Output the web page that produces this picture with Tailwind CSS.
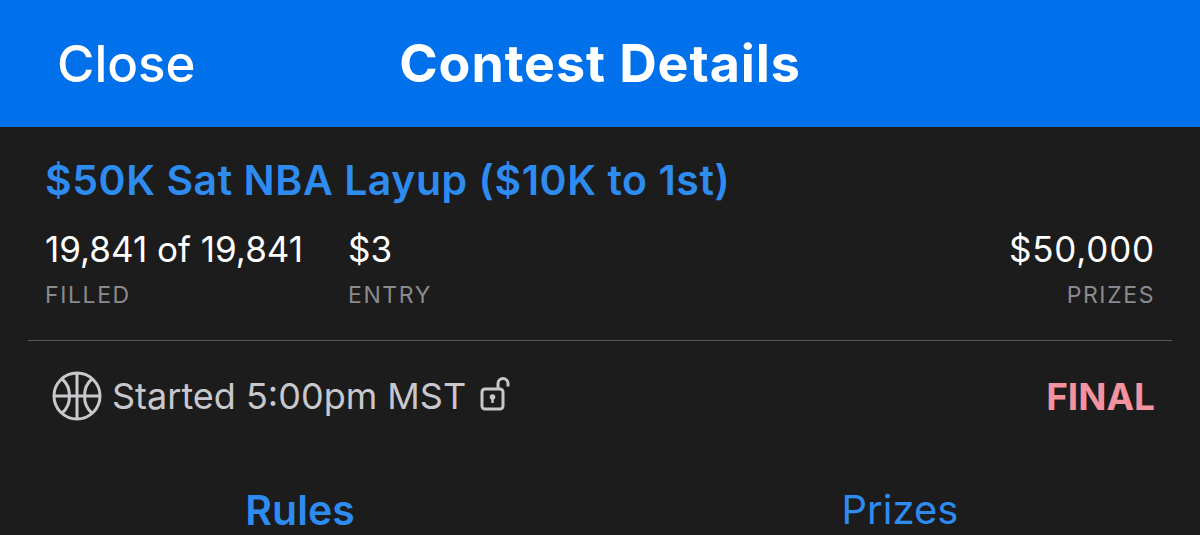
<!DOCTYPE html>
<html><head><script src="https://cdn.jsdelivr.net/npm/@tailwindcss/browser@4"></script></head>
<body class="m-0 w-[1200px] h-[535px] overflow-hidden bg-[#1c1c1c] font-['Inter',sans-serif] text-white">
<header class="h-[127px] bg-[#0070eb] flex items-center relative">
<span class="ml-[57px] text-[51px] leading-none font-medium text-white">Close</span>
<h1 class="absolute left-0 right-0 text-center text-[52px] leading-none font-bold tracking-[0.9px]">Contest Details</h1>
</header>
<section class="px-[45px] pt-[31px]">
<h2 class="text-[41px] leading-[44px] font-semibold text-[#2e8bf0] tracking-[0.55px]">$50K Sat NBA Layup ($10K to 1st)</h2>
<div class="flex mt-[27px]">
<div class="w-[303px]"><div class="text-[35px] leading-[40px]">19,841 of 19,841</div><div class="text-[23px] leading-[30px] tracking-[1.6px] text-[#8a8a8e] mt-[11px]">FILLED</div></div>
<div><div class="text-[35px] leading-[40px]">$3</div><div class="text-[23px] leading-[30px] tracking-[1.6px] text-[#8a8a8e] mt-[11px]">ENTRY</div></div>
<div class="ml-auto text-right"><div class="text-[35px] leading-[40px] tracking-[0.8px]">$50,000</div><div class="text-[23px] leading-[30px] tracking-[1.6px] text-[#8a8a8e] mt-[11px]">PRIZES</div></div>
</div>
</section>
<div class="mx-[28px] mt-[30px] h-px bg-[#555]"></div>
<div class="flex items-center pl-[52px] pr-[45px] h-[110px] text-[#c8c8cc]">
<svg width="50" height="50" viewBox="0 0 50 50" fill="none" stroke="#c8c8cc" stroke-width="3"><circle cx="25" cy="25" r="23"/><path d="M2 25H48M25 2V48M10 8C20 16 20 34 10 42M40 8C30 16 30 34 40 42"/></svg>
<span class="ml-[10px] text-[36px] leading-none">Started 5:00pm MST</span>
<svg class="ml-[14px] -mt-[4px]" width="32" height="34" viewBox="0 0 32 34" fill="none" stroke="#c8c8cc" stroke-width="3"><rect x="2" y="12" width="21" height="20" rx="3"/><path d="M18 12V6.5a5 5 0 0 1 10 0v3"/><circle cx="12.5" cy="20" r="2.8" fill="#c8c8cc" stroke="none"/><path d="M12.5 21v5" stroke-width="2.4"/></svg>
<span class="ml-auto text-[37px] leading-none font-bold text-[#f2939f]">FINAL</span>
</div>
<nav class="grid grid-cols-2 text-center leading-none text-[#2e8bf0] mt-[39px]">
<span class="font-semibold text-[41px] leading-[40px]">Rules</span><span class="text-[40px] leading-[40px]">Prizes</span>
</nav>
</body></html>
